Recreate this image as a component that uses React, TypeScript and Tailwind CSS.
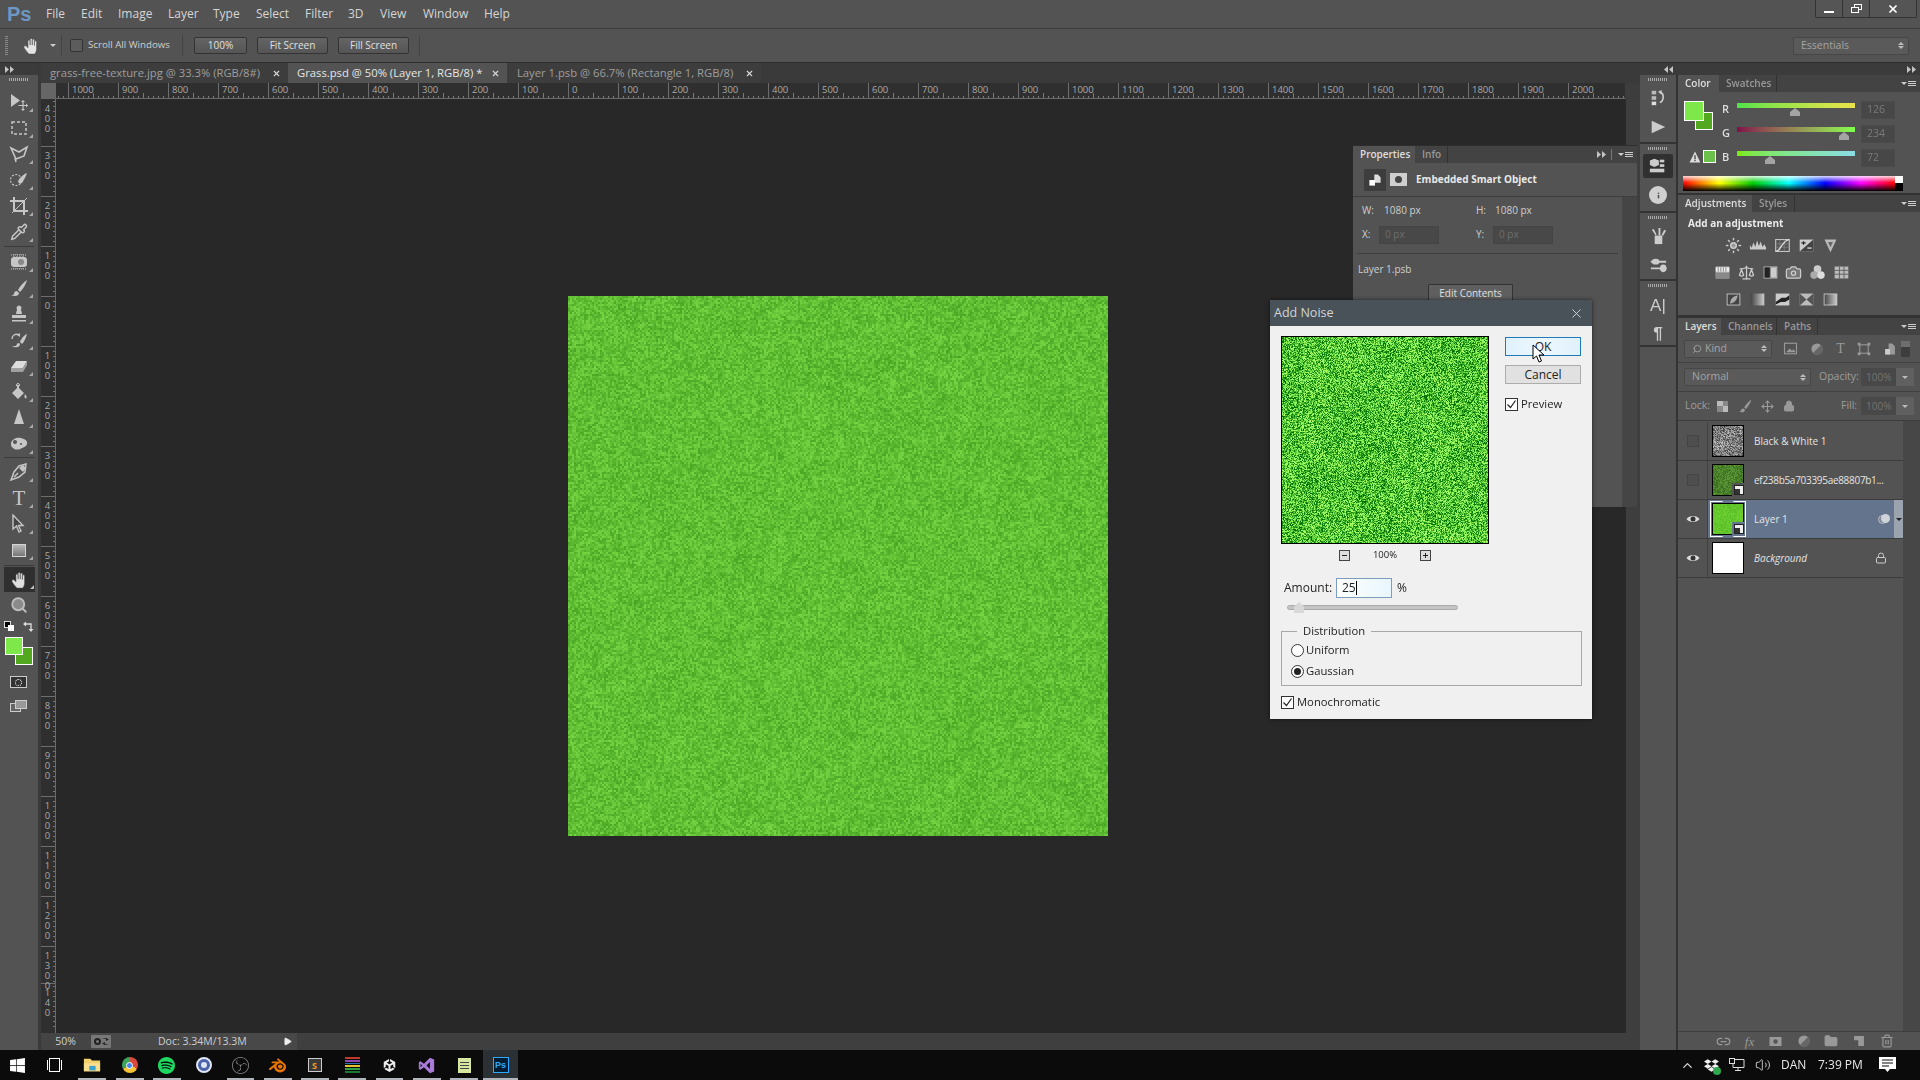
import React, { useEffect, useRef } from "react";
import { Search, Pipette, Sun, Scale, Camera, X, Link2, Trash2, ChevronUp, Volume2, Info, Play, Lock, Move, Folder } from "lucide-react";
import { SiSpotify, SiObsstudio, SiBlender, SiUnity, SiDropbox } from "react-icons/si";
import { FaWindows } from "react-icons/fa";

type NoiseProps = { w: number; h: number; base: number[]; amp: number[]; cell?: number; coarse?: number; seed?: number; className?: string };
function Noise({ w, h, base, amp, cell = 1, coarse = 0.3, seed = 7, className }: NoiseProps) {
  const ref = useRef<HTMLCanvasElement>(null);
  useEffect(() => {
    const c = ref.current;
    if (!c) return;
    const ctx = c.getContext("2d");
    if (!ctx) return;
    let s = (seed * 2654435 + 17) >>> 0;
    const rnd = () => {
      s = (s + 0x6d2b79f5) >>> 0;
      let t = s;
      t = Math.imul(t ^ (t >>> 15), t | 1);
      t ^= t + Math.imul(t ^ (t >>> 7), t | 61);
      return ((t ^ (t >>> 14)) >>> 0) / 4294967296;
    };
    const gs = 10;
    const gw = Math.ceil(w / gs) + 2;
    const gh = Math.ceil(h / gs) + 2;
    const grid: number[] = [];
    for (let i = 0; i < gw * gh; i++) grid.push(rnd() * 2 - 1);
    for (let y = 0; y < h; y += cell) {
      for (let x = 0; x < w; x += cell) {
        const fx = x / gs;
        const fy = y / gs;
        const ix = Math.floor(fx);
        const iy = Math.floor(fy);
        const tx = fx - ix;
        const ty = fy - iy;
        const a = grid[iy * gw + ix];
        const b = grid[iy * gw + ix + 1];
        const d = grid[(iy + 1) * gw + ix];
        const e = grid[(iy + 1) * gw + ix + 1];
        const low = (a * (1 - tx) + b * tx) * (1 - ty) + (d * (1 - tx) + e * tx) * ty;
        const n = (rnd() * 2 - 1) * (1 - coarse) + low * coarse;
        ctx.fillStyle = `rgb(${base[0] + n * amp[0]},${base[1] + n * amp[1]},${base[2] + n * amp[2]})`;
        ctx.fillRect(x, y, cell, cell);
      }
    }
  }, []);
  return <canvas ref={ref} width={w} height={h} className={"block " + (className ?? "")} />;
}

const G = "#c6c6c6";
function Ico({ children, size = 20 }: { children: React.ReactNode; size?: number }) {
  return (
    <svg viewBox="0 0 20 20" width={size} height={size} fill="none" stroke="none">
      {children}
    </svg>
  );
}

function HandIcon({ size = 18, color = "#dedede" }: { size?: number; color?: string }) {
  return (
    <Ico size={size}>
      <path d="M6.500 19C5 16.500 1 13 1 11c0-1.300 1.700-1.700 2.800-.7L5.500 12V4.500a1.200 1.200 0 0 1 2.400 0V9V2.800a1.200 1.200 0 0 1 2.400 0V9V3.500a1.200 1.200 0 0 1 2.400 0V9.500V5.500a1.200 1.200 0 0 1 2.400 0V13c0 2.500-1 4.500-2 6z" fill={color} stroke="#4a4a4a" strokeWidth="0.6" />
    </Ico>
  );
}

function Arrows({ left, color = "#c4c4c4" }: { left?: boolean; color?: string }) {
  return (
    <svg width="9" height="7" viewBox="0 0 9 7">
      <path d={left ? "M4 0v7L0 3.500zM9 0v7L5 3.500z" : "M0 0v7l4-3.500zM5 0v7l4-3.500z"} fill={color} />
    </svg>
  );
}

const tools1 = [
  <Ico key="m"><path d="M2 2v13l9-6.5z" fill={G} /><path d="M14 9v9M9.5 13.5h9" stroke={G} strokeWidth="1.2" /><path d="M14 8l-2 2h4zM14 19l-2-2h4zM19 13.500l-2-2v4z" fill={G} /></Ico>,
  <Ico key="r"><rect x="3" y="4" width="14" height="12" stroke={G} strokeWidth="1.5" strokeDasharray="3 2" /></Ico>,
  <Ico key="l"><path d="M2 4l8 4 8-5-3 9-8 3z" stroke={G} strokeWidth="1.6" /><path d="M6 14l1 4" stroke={G} strokeWidth="1.6" /></Ico>,
  <Ico key="q"><circle cx="7" cy="10" r="5.500" stroke={G} strokeWidth="1.2" strokeDasharray="2 1.500" /><path d="M18 3c-3 1-7 4-9 8 0 2 2 3 4 2 2-3 4-7 5-10z" fill={G} /></Ico>,
  <Ico key="c"><path d="M5 1v14h14M1 5h14v14" stroke={G} strokeWidth="2" /><path d="M3 17L18 2" stroke={G} strokeWidth="1" /></Ico>,
  <Pipette key="p" size={18} color={G} strokeWidth={2} />,
];
const tools2 = [
  <Ico key="h"><rect x="2" y="5" width="16" height="10" rx="3" fill={G} /><path d="M2 3h16M2 17h16M5 2v4M8 2v4M11 2v4M14 2v4M5 14v4M8 14v4M11 14v4M14 14v4" stroke={G} strokeWidth="1" strokeDasharray="1 1" /><circle cx="12" cy="10" r="3" fill="#888" /></Ico>,
  <Ico key="b"><path d="M18 2c-3 2-7 6-9 10l2 2c3-3 6-8 7-12zM8 13c-2 0-3 1-3 3 0 1-2 1-3 1 3 1.500 8 1.500 8-2z" fill={G} /></Ico>,
  <Ico key="s"><path d="M7 10h6c0-2-1-3-1-4.500a2.500 2.500 0 1 0-4 0C8 7 7 8 7 10zM3 11h14v3H3zM3 16h14v1.500H3z" fill={G} /></Ico>,
  <Ico key="hb"><path d="M18 4c-3 1-6 5-7 8l2 2c2-2 4-6 5-10zM10 13c-2 0-2 1-3 3H3c3 2 8 2 8-2z" fill={G} /><path d="M3 9c0-4 4-6 7-4" stroke={G} strokeWidth="1.400" /><path d="M11 3v4l-3-2z" fill={G} /></Ico>,
  <Ico key="e"><path d="M7 5h11l-4 7H2z" fill="#dcdcdc" /><path d="M2 12h12v4H2zM14 12l4-7v4l-4 7z" fill="#a0a0a0" /></Ico>,
  <Ico key="bk"><path d="M8 3v3L3 11l6 6 6-6-5-5V3z" fill={G} /><path d="M16 12c2 2 2 4 1 4.500-1.500 0-2-2-1-4.500z" fill={G} /><circle cx="9" cy="3" r="1.500" stroke={G} /></Ico>,
  <Ico key="d"><path d="M10 1l5 15H5z" fill={G} /></Ico>,
  <Ico key="sp"><path d="M2 9c1-4 6-6 10-5 4 1 7 3 6 6-1 3-3 3-5 4-3 2-7 2-9 0-2-1-2-3-2-5z" fill={G} /><circle cx="6" cy="8" r="2" fill="#555" /><circle cx="12" cy="10" r="1" fill="#555" /></Ico>,
];
const tools3 = [
  <Ico key="pn"><path d="M17 2l-7 2-5 6-3 8 8-3 6-5zM5 15l4-4" stroke={G} strokeWidth="1.500" /><path d="M14 3l3 3-3 4-4-4z" fill={G} /></Ico>,
  <span key="t" className="font-['Liberation_Serif',serif] text-[21px] leading-none text-[#c6c6c6]">T</span>,
  <Ico key="a"><path d="M4 1v14l3.500-3 2.500 6 2-1-2.500-5.500H14z" stroke={G} strokeWidth="1.400" fill="#444" /></Ico>,
  <div key="rc" className="h-[13px] w-[14px] border border-[#d4d4d4] bg-gradient-to-b from-[#b8b8b8] to-[#777]" />,
];

function ToolBtn({ children, corner = true, sel = false }: { children: React.ReactNode; corner?: boolean; sel?: boolean }) {
  return (
    <div className={sel ? "relative mx-[4px] flex h-[25px] w-[31px] items-center justify-center bg-[#2f2f2f]" : "relative flex h-[26px] w-full items-center justify-center"}>
      {children}
      {corner && <div className={sel ? "absolute bottom-[3px] right-[1px] h-0 w-0 border-b-[4px] border-l-[4px] border-b-[#bbb] border-l-transparent" : "absolute bottom-[3px] right-[5px] h-0 w-0 border-b-[4px] border-l-[4px] border-b-[#aaa] border-l-transparent"} />}
    </div>
  );
}

function Grip({ className }: { className?: string }) {
  return <div className={"h-[3px] border-x-0 bg-[repeating-linear-gradient(to_right,#aaa_0,#aaa_1px,transparent_1px,transparent_2px)] " + (className ?? "")} />;
}

function Toolbar() {
  return (
    <div className="flex h-full w-[41px] shrink-0">
      <div className="flex w-[38px] flex-col bg-[#535353]">
        <div className="flex h-[12px] items-center bg-[#3b3b3b] pl-[5px]"><Arrows /></div>
        <Grip className="mx-[9px] mt-[3px]" />
        <div className="h-[8px]" />
        {tools1.map((t, i) => <ToolBtn key={i}>{t}</ToolBtn>)}
        <div className="mx-[4px] my-[1px] h-[1px] bg-[#3a3a3a]" />
        <div className="h-[1px]" />
        {tools2.map((t, i) => <ToolBtn key={i}>{t}</ToolBtn>)}
        <div className="mx-[4px] h-[1px] bg-[#3a3a3a]" />
        <div className="h-[1px]" />
        {tools3.map((t, i) => <ToolBtn key={i}>{t}</ToolBtn>)}
        <div className="mx-[4px] mt-[2px] h-[1px] bg-[#3a3a3a]" />
        <div className="h-[1px]" />
        <ToolBtn sel><HandIcon /></ToolBtn>
        <ToolBtn corner={false}><Search size={18} color="#bdbdbd" fill="#8a8a8a" strokeWidth={2.500} /></ToolBtn>
        <div className="flex h-[16px] items-center justify-between px-[4px]">
          <div className="relative h-[10px] w-[10px]">
            <div className="absolute left-0 top-0 h-[7px] w-[7px] border border-[#ddd] bg-black" />
            <div className="absolute bottom-0 right-0 h-[6px] w-[6px] bg-white" />
          </div>
          <svg width="11" height="11" viewBox="0 0 11 11"><path d="M2 3h6v6" stroke="#ddd" strokeWidth="1.300" fill="none" /><path d="M3 0.500v5L0 3zM5.500 8h5L8 11z" fill="#ddd" /></svg>
        </div>
        <div className="relative ml-[5px] mt-[3px] h-[28px] w-[28px]">
          <div className="absolute bottom-0 right-0 h-[18px] w-[18px] border border-white bg-[#52a920]" />
          <div className="absolute left-0 top-0 h-[18px] w-[18px] border border-white bg-[#7ee84a]" />
        </div>
        <div className="ml-[10px] mt-[11px] flex h-[12px] w-[17px] items-center justify-center border border-[#ccc] bg-[#333]">
          <div className="h-[7px] w-[7px] rounded-full border border-dotted border-white" />
        </div>
        <div className="relative ml-[10px] mt-[12px] h-[12px] w-[17px]">
          <div className="absolute bottom-0 left-0 h-[9px] w-[11px] border border-[#ccc] bg-[#666]" />
          <div className="absolute right-0 top-0 h-[9px] w-[12px] border border-[#ccc] bg-[#999]" />
        </div>
      </div>
      <div className="w-[3px] bg-[#3a3a3a]" />
    </div>
  );
}

function Tab({ label, active, w, pl }: { label: string; active?: boolean; w: string; pl: string }) {
  return (
    <div className={`flex h-full items-center ${w} ${pl} ${active ? "bg-[#535353] text-[#e6e6e6]" : "bg-[#3d3d3d] text-[#9d9d9d]"}`}>
      <span className="flex-1 whitespace-nowrap text-[11.25px]">{label}</span>
      <X size={9} strokeWidth={3} color="#d8d8d8" className="mr-[7px]" />
    </div>
  );
}

function HRuler() {
  const x0 = 568 - 56;
  const vals: number[] = [];
  for (let v = -1000; v <= 2000; v += 100) vals.push(v);
  const small: number[] = [];
  for (let x = 0; x < 1569; x += 5) small.push(x);
  return (
    <svg width="1569" height="16" className="block bg-[#2f2f2f]">
      {small.map((x) => {
        const k = Math.round((x - x0 + 1000) / 5) % 10;
        const h = k === 5 ? 5 : 2;
        return <rect key={x} x={x + (x0 % 5)} y={15 - h} width="1" height={h} fill="#7a7a7a" />;
      })}
      {vals.map((v) => (
        <g key={v}>
          <rect x={x0 + v / 2} y="0" width="1" height="15" fill="#6d6d6d" />
          <text x={x0 + v / 2 + 4} y="10" fontSize="9.5" fill="#a9a9a9" fontFamily="Open Sans">{Math.abs(v)}</text>
        </g>
      ))}
      <rect x="0" y="15" width="1569" height="1" fill="#6a6a6a" />
    </svg>
  );
}

function VRuler() {
  const y0 = 296 - 99;
  const vals: number[] = [];
  for (let v = -300; v <= 1300; v += 100) vals.push(v);
  const small: number[] = [];
  for (let y = 4; y < 934; y += 5) small.push(y);
  return (
    <svg width="15" height="934" className="block shrink-0 bg-[#2f2f2f]">
      {small.map((y) => {
        const k = ((y - (y0 % 50) + 5000) % 50) === 25;
        return <rect key={y} x={k ? 10 : 12} y={y - 2} width={k ? 5 : 3} height="1" fill="#777" />;
      })}
      <text x="6.500" y="3" fontSize="9.500" fill="#a9a9a9" fontFamily="Open Sans" className="[writing-mode:vertical-rl] [text-orientation:upright] tracking-[-2.9px]">400</text>
      <rect x="0" y="884" width="15" height="1" fill="#6d6d6d" />
      <text x="6.500" y="887" fontSize="9.500" fill="#a9a9a9" fontFamily="Open Sans" className="[writing-mode:vertical-rl] [text-orientation:upright] tracking-[-2.9px]">140</text>
      {vals.map((v) => (
        <g key={v}>
          <rect x="0" y={y0 + v / 2} width="15" height="1" fill="#6d6d6d" />
          <text x="6.500" y={y0 + v / 2 + 3} fontSize="9.500" fill="#a9a9a9" fontFamily="Open Sans" className="[writing-mode:vertical-rl] [text-orientation:upright] tracking-[-2.9px]">{Math.abs(v)}</text>
        </g>
      ))}
      <rect x="14" y="0" width="1" height="934" fill="#6a6a6a" />
    </svg>
  );
}

const BASE = [96, 190, 52];
const AMP = [27, 27, 18];

function DocArea() {
  return (
    <div className="flex h-full min-w-0 flex-1 flex-col">
      <div className="flex h-[20px] shrink-0 bg-[#3a3a3a]">
        <Tab w="w-[247px]" pl="pl-[9px]" label="grass-free-texture.jpg @ 33.3% (RGB/8#)" />
        <Tab w="w-[219px]" pl="pl-[9px]" active label="Grass.psd @ 50% (Layer 1, RGB/8) *" />
        <Tab w="w-[254px]" pl="pl-[10px]" label="Layer 1.psb @ 66.7% (Rectangle 1, RGB/8)" />
      </div>
      <div className="flex h-[16px] shrink-0">
        <div className="h-[16px] w-[15px] bg-[#666]" />
        <HRuler />
        <div className="flex-1 bg-[#3d3d3d]" />
      </div>
      <div className="flex min-h-0 flex-1">
        <VRuler />
        <div className="flex flex-1 items-center justify-center bg-[#282828] pr-[5px]">
          <Noise w={540} h={540} base={BASE} amp={AMP} cell={2} coarse={0.2} seed={11} />
        </div>
        <div className="w-[15px] border-l border-[#2a2a2a] bg-[#3e3e3e]" />
      </div>
      <div className="flex h-[17px] shrink-0 items-center bg-[#484848] text-[10.5px] text-[#cfcfcf]">
        <div className="flex h-full w-[50px] items-center justify-end bg-[#444] pr-[15px]">50%</div>
        <div className="flex h-[13px] w-[20px] items-center justify-center gap-[1px] rounded-[1px] bg-[#777]">
          <div className="h-[7px] w-[7px] rounded-full border-2 border-[#222]" />
          <svg width="7" height="7" viewBox="0 0 7 7"><path d="M0 1h4v2l3-1.500L4 0zM7 6H3V4L0 5.500 3 7z" fill="#222" /></svg>
        </div>
        <div className="ml-[47px] w-[125px]">Doc: 3.34M/13.3M</div>
        <Play size={9} fill="#eee" color="#eee" />
        <div className="ml-[5px] h-full flex-1 bg-[#3f3f3f]" />
      </div>
    </div>
  );
}

function PanelTabs({ tabs, extra }: { tabs: { t: string; w: string }[]; extra?: React.ReactNode }) {
  return (
    <div className="flex h-[17px] shrink-0 items-stretch bg-[#434343]">
      {tabs.map((t, i) => (
        <div key={t.t} className={`flex items-center pl-[7px] text-[10px] font-semibold ${t.w} ${i === 0 ? "bg-[#535353] text-[#dedede]" : "border-r border-[#333] text-[#999]"}`}>{t.t}</div>
      ))}
      <div className="flex-1" />
      {extra}
      <MenuIcon />
    </div>
  );
}
function MenuIcon() {
  return (
    <div className="mr-[4px] flex items-center gap-[1px] self-center">
      <div className="h-0 w-0 border-x-[3px] border-t-[3px] border-x-transparent border-t-[#ccc]" />
      <div className="flex flex-col gap-[1px]">
        <div className="h-[1px] w-[8px] bg-[#ccc]" />
        <div className="h-[1px] w-[8px] bg-[#ccc]" />
        <div className="h-[1px] w-[8px] bg-[#ccc]" />
      </div>
    </div>
  );
}

function Thumb({ left }: { left: string }) {
  return (
    <div className={`absolute top-[5px] h-[8px] w-[10px] bg-[#a4a4a4] [clip-path:polygon(50%_0,100%_50%,100%_100%,0_100%,0_50%)] ${left}`} />
  );
}

function ColorRow({ l, grad, thumb, val }: { l: string; grad: string; thumb: string; val: string }) {
  return (
    <div className="flex h-[24px] items-start">
      <div className="w-[15px] text-[11px] font-semibold leading-[16px] text-[#ddd]">{l}</div>
      <div className={`relative mt-[2px] h-[5px] w-[118px] ${grad}`}>
        <Thumb left={thumb} />
      </div>
      <div className="ml-[6px] flex h-[18px] w-[34px] items-center border border-[#4a4a4a] bg-[#474747] pl-[5px] text-[10.5px] text-[#7a7a7a]">{val}</div>
    </div>
  );
}

function ColorPanel() {
  return (
    <div className="h-[101px] shrink-0 bg-[#535353]">
      <div className="flex h-[81px] pt-[9px]">
        <div className="flex w-[44px] shrink-0 flex-col pl-[6px]">
          <div className="relative h-[29px] w-[29px]">
            <div className="absolute bottom-0 right-0 h-[18px] w-[18px] border border-white bg-[#52a920]" />
            <div className="absolute left-0 top-0 h-[20px] w-[20px] border border-white bg-[#7ee84a]" />
          </div>
          <div className="mt-[20px] flex items-center gap-[2px] pl-[5px]">
            <Ico size={12}><path d="M10 1L19 19H1z" fill="#ddd" /><rect x="9" y="7" width="2" height="7" fill="#333" /><rect x="9" y="15" width="2" height="2" fill="#333" /></Ico>
            <div className="h-[13px] w-[13px] border border-white bg-[#6cc04c]" />
          </div>
        </div>
        <div>
          <ColorRow l="R" val="126" grad="bg-gradient-to-r from-[#4de44a] to-[#eae24a]" thumb="left-[53px]" />
          <ColorRow l="G" val="234" grad="bg-gradient-to-r from-[#7e0a48] to-[#7eff48]" thumb="left-[102px]" />
          <ColorRow l="B" val="72" grad="bg-gradient-to-r from-[#7eea00] to-[#8cdce6]" thumb="left-[28px]" />
        </div>
      </div>
      <div className="ml-[5px] mt-[3px] flex h-[15px] w-[220px]">
        <div className="flex-1 bg-[linear-gradient(to_bottom,rgba(255,255,255,0.85),rgba(255,255,255,0)_45%,rgba(0,0,0,0)_50%,#000),linear-gradient(to_right,#f00,#ff0_17%,#0c0_33%,#0ff_50%,#00f_67%,#f0f_84%,#f00)]" />
        <div className="flex w-[8px] flex-col"><div className="h-[7px] bg-white" /><div className="flex-1 bg-black" /></div>
      </div>
    </div>
  );
}

const ad = "url(#adg)";
const adjRow1 = [
  <Sun key="1" size={17} color="#ccc" fill="#999" strokeWidth={2} />,
  <Ico key="2" size={18}><path d="M1 14V9l2 3 2-6 2 5 2-7 2 6 2-5 2 6 2-3 2 4v2z" fill="#ccc" /></Ico>,
  <Ico key="3" size={17}><rect x="2" y="3" width="16" height="14" stroke="#ccc" strokeWidth="1.200" /><path d="M2 8h16M2 12h16M7 3v14M12 3v14" stroke="#888" strokeWidth=".8" /><path d="M2 17c6 0 8-14 16-14" stroke="#ddd" strokeWidth="1.500" /></Ico>,
  <Ico key="4" size={17}><rect x="2" y="3" width="16" height="14" fill="#ccc" /><path d="M2 17L18 3V17z" fill="#444" /><path d="M4 7h5M6.500 5v4" stroke="#222" strokeWidth="1.400" /><path d="M11 13h5" stroke="#eee" strokeWidth="1.400" /></Ico>,
  <Ico key="5" size={17}><path d="M3 3h14l-7 15z" fill="#bbb" /><path d="M7 6h6l-3 6z" fill="#666" /></Ico>,
];
const adjRow2 = [
  <Ico key="1" size={17}><rect x="2" y="3" width="16" height="14" fill="#bbb" /><rect x="2" y="4" width="16" height="5" fill="#eee" /><path d="M5 4v5M8 4v5M11 4v5M14 4v5" stroke="#777" /><rect x="2" y="10" width="16" height="7" fill="#888" /></Ico>,
  <Scale key="2" size={17} color="#ccc" strokeWidth={1.800} />,
  <Ico key="3" size={17}><rect x="2.500" y="3.500" width="15" height="13" stroke="#ccc" /><rect x="3" y="4" width="6" height="12" fill="#222" /><rect x="10" y="4" width="7" height="12" fill="#ccc" /></Ico>,
  <Camera key="4" size={17} color="#ccc" fill="#777" strokeWidth={1.800} />,
  <Ico key="5" size={17}><circle cx="10" cy="6" r="4.500" fill="#ccc" /><circle cx="6" cy="13" r="4.500" fill="#aaa" /><circle cx="14" cy="13" r="4.500" fill="#ddd" /></Ico>,
  <Ico key="6" size={17}><rect x="2" y="3" width="16" height="14" fill="#bbb" /><path d="M2 7.500h16M2 12h16M7.500 3v14M13 3v14" stroke="#555" /></Ico>,
];
const adjRow3 = [
  <Ico key="1" size={17}><rect x="2.500" y="3.500" width="15" height="13" fill="#444" stroke="#ccc" /><path d="M6 15c0-6 4-9 9-10-1 6-4 9-9 10z" fill="#aaa" /></Ico>,
  <Ico key="2" size={17}><rect x="2" y="3" width="16" height="14" fill={ad} /></Ico>,
  <Ico key="3" size={17}><rect x="2" y="3" width="16" height="14" fill="#ccc" /><path d="M2 13l7-5h5l4-3v5l-5 3H8l-6 3z" fill="#222" /></Ico>,
  <Ico key="4" size={17}><rect x="2" y="3" width="16" height="14" fill="#bbb" /><path d="M2 3l8 7-8 7zM18 3l-8 7 8 7z" fill="#555" /></Ico>,
  <Ico key="5" size={17}><rect x="2.500" y="3.500" width="15" height="13" fill={ad} stroke="#ccc" /></Ico>,
];

function AdjPanel() {
  return (
    <div className="flex h-[103px] shrink-0 flex-col bg-[#535353]">
      <div className="pl-[10px] pt-[4px] text-[10px] font-bold leading-[15px] text-[#eaeaea]">Add an adjustment</div>
      <svg width="0" height="0" className="absolute"><defs><linearGradient id="adg" x1="0" x2="1"><stop offset="0" stopColor="#444" /><stop offset="1" stopColor="#ccc" /></linearGradient></defs></svg>
      <div className="ml-[47px] mt-[1px] flex h-[27px] w-[114px] items-center justify-between">{adjRow1}</div>
      <div className="ml-[36px] flex h-[27px] w-[136px] items-center justify-between">{adjRow2}</div>
      <div className="ml-[47px] flex h-[27px] w-[114px] items-center justify-between">{adjRow3}</div>
    </div>
  );
}

function DropBox({ w, text }: { w: string; text: React.ReactNode }) {
  return (
    <div className={`flex h-[18px] items-center justify-between rounded-[2px] border border-[#474747] bg-[#5a5a5a] pl-[7px] pr-[4px] text-[10.5px] text-[#a4a4a4] ${w}`}>
      {text}
      <div className="flex flex-col gap-[1px]">
        <div className="h-0 w-0 border-x-[3px] border-b-[3px] border-x-transparent border-b-[#bbb]" />
        <div className="h-0 w-0 border-x-[3px] border-t-[3px] border-x-transparent border-t-[#bbb]" />
      </div>
    </div>
  );
}

function Spin({ v }: { v: string }) {
  return (
    <div className="flex h-[18px] w-[53px] text-[10px] text-[#737373]">
      <div className="flex w-[35px] items-center bg-[#484848] pl-[5px]">{v}</div>
      <div className="flex flex-1 items-center justify-center bg-[#606060]">
        <div className="h-0 w-0 border-x-[3px] border-t-[3px] border-x-transparent border-t-[#bbb]" />
      </div>
    </div>
  );
}

function Badge({ sel }: { sel?: boolean }) {
  return (
    <div className={`absolute bottom-[-2px] right-[-2px] flex h-[14px] w-[13px] items-center justify-center ${sel ? "bg-[#64748c]" : "bg-[#535353]"}`}>
      <div className="relative h-[10px] w-[10px] border border-[#222] bg-[#eee]">
        <div className="absolute bottom-0 left-0 h-[5px] w-[5px] bg-[#333]" />
      </div>
    </div>
  );
}

function Eye() {
  return (
    <svg width="14" height="10" viewBox="0 0 14 10">
      <path d="M0.500 5C3 1 11 1 13.500 5 11 9 3 9 0.500 5z" fill="#ddd" />
      <circle cx="7" cy="5" r="2.500" fill="#333" />
    </svg>
  );
}

function LayerRow({ name, vis, sel, italic, thumb, badge, right, nameCls }: { name: string; vis: boolean; sel?: boolean; italic?: boolean; thumb: React.ReactNode; badge?: boolean; right?: React.ReactNode; nameCls?: string }) {
  return (
    <div className="flex h-[39px] shrink-0 border-b border-[#3c3c3c]">
      <div className="flex w-[30px] shrink-0 items-center justify-center border-r border-[#404040]">
        {vis ? <Eye /> : <div className="h-[12px] w-[12px] border border-[#444] bg-[#4e4e4e]" />}
      </div>
      <div className={`flex flex-1 items-center pl-[4px] ${sel ? "bg-[#64748c]" : "bg-[#535353]"}`}>
        <div className="relative h-[32px] w-[32px] shrink-0 border border-black">
          {thumb}
          {badge && <Badge sel={sel} />}
          {sel && <div className="absolute -inset-[3px] border border-white [clip-path:polygon(0_0,35%_0,35%_6%,6%_6%,6%_94%,35%_94%,35%_100%,0_100%,0_0,100%_0,100%_100%,65%_100%,65%_94%,94%_94%,94%_6%,65%_6%,65%_0,100%_0)]" />}
        </div>
        <div className={`ml-[10px] flex-1 truncate pt-[1px] text-[10px] ${italic ? "italic" : ""} ${nameCls ?? ""} text-[#e4e4e4]`}>{name}</div>
        {right}
      </div>
    </div>
  );
}

function LayersPanel() {
  return (
    <div className="flex min-h-0 flex-1 flex-col bg-[#535353]">
      <PanelTabs tabs={[{ t: "Layers", w: "w-[43px]" }, { t: "Channels", w: "w-[56px]" }, { t: "Paths", w: "w-[41px]" }]} />
      <div className="flex h-[28px] shrink-0 items-center border-b border-[#404040] pl-[6px]">
        <DropBox w="w-[88px]" text={<span className="flex items-center gap-[3px]"><Search size={10} className="-scale-x-100" />Kind</span>} />
        <div className="ml-[11px] flex w-[114px] items-center justify-between text-[#999]">
          <Ico size={15}><rect x="2" y="3" width="16" height="14" stroke="#999" strokeWidth="1.500" /><path d="M4 15l5-5 3 3 2-2 3 4z" fill="#999" /></Ico>
          <Ico size={14}><circle cx="10" cy="10" r="8" fill="#999" /><path d="M4 16L16 4A8 8 0 0 1 4 16z" fill="#666" /></Ico>
          <span className="font-['Liberation_Serif',serif] text-[14px] leading-none">T</span>
          <Ico size={14}><rect x="4" y="4" width="12" height="12" stroke="#999" strokeWidth="1.500" /><path d="M1 1h4v4H1zM15 1h4v4h-4zM1 15h4v4H1zM15 15h4v4h-4z" fill="#999" /></Ico>
          <Ico size={14}><path d="M8 2h5l4 4v12H8z" fill="#999" /><path d="M3 10h7v8H3z" fill="#ccc" /></Ico>
        </div>
        <div className="ml-[4px] flex h-[16px] w-[9px] flex-col rounded-[1px] bg-[#3d3d3d]"><div className="h-[6px] bg-[#6e6e6e]" /></div>
      </div>
      <div className="flex h-[29px] shrink-0 items-center border-b border-[#404040] pl-[6px]">
        <DropBox w="w-[127px]" text="Normal" />
        <span className="ml-[8px] w-[42px] text-[10.5px] text-[#9d9d9d]">Opacity:</span>
        <Spin v="100%" />
      </div>
      <div className="flex h-[29px] shrink-0 items-center border-b border-[#3c3c3c] pl-[7px] text-[10.5px] text-[#9d9d9d]">
        <span className="w-[32px]">Lock:</span>
        <div className="flex w-[78px] items-center justify-between">
          <div className="grid h-[11px] w-[11px] grid-cols-2 bg-[#888]"><div className="bg-[#bbb]" /><div /><div /><div className="bg-[#bbb]" /></div>
          <Ico size={16}><path d="M18 2c-3 2-7 6-9 10l2 2c3-3 6-8 7-12zM8 13c-2 0-3 1-3 3-1 1-2 1-3 1 3 1.500 8 1.500 8-2z" fill="#999" /></Ico>
          <Move size={13} color="#999" />
          <Lock size={12} color="#999" fill="#999" />
        </div>
        <span className="ml-[46px] w-[20px]">Fill:</span>
        <span><Spin v="100%" /></span>
      </div>
      <div className="flex min-h-0 flex-1">
        <div className="flex w-[225px] shrink-0 flex-col pt-[1px]">
          <LayerRow name="Black & White 1" vis={false} thumb={<Noise w={30} h={30} base={[125, 125, 125]} amp={[85, 85, 85]} seed={3} />} />
          <LayerRow name="ef238b5a703395ae88807b1..." nameCls="tracking-[-0.3px]" vis={false} badge thumb={<Noise w={30} h={30} base={[70, 125, 40]} amp={[30, 35, 20]} seed={5} />} />
          <LayerRow name="Layer 1" vis sel badge thumb={<Noise w={30} h={30} base={[100, 200, 45]} amp={[18, 18, 10]} seed={9} />} right={
            <div className="flex h-full items-center">
              <div className="relative mr-[4px] h-[10px] w-[12px]"><div className="absolute left-0 top-[1px] h-[9px] w-[9px] rounded-full border border-[#bbb] bg-[#7a869a]" /><div className="absolute right-0 top-0 h-[9px] w-[9px] rounded-full bg-[#cfd3da]" /></div>
              <div className="flex h-full w-[9px] items-center justify-center bg-[#9aa3ae]"><div className="h-0 w-0 border-x-[3px] border-t-[3px] border-x-transparent border-t-[#222]" /></div>
            </div>} />
          <LayerRow name="Background" vis italic thumb={<div className="h-full w-full bg-white" />} right={<Lock size={12} color="#ccc" className="mr-[16px]" />} />
          <div className="flex-1" />
        </div>
        <div className="flex-1 bg-[#474747]" />
      </div>
      <div className="flex h-[19px] shrink-0 items-center border-t border-[#3f3f3f] bg-[#535353] pl-[38px] text-[#999]">
        <div className="flex w-[178px] items-center justify-between">
          <Link2 size={15} />
          <span className="font-['Liberation_Serif',serif] text-[13px] italic leading-none">fx</span>
          <Ico size={15}><rect x="2" y="4" width="16" height="12" fill="#999" /><circle cx="10" cy="10" r="3" fill="#555" /></Ico>
          <Ico size={14}><circle cx="10" cy="10" r="8" fill="#999" /><path d="M4 16L16 4A8 8 0 0 1 4 16z" fill="#666" /></Ico>
          <Folder size={14} fill="#999" />
          <Ico size={14}><path d="M3 3h14v14H9V9H3z" fill="#999" /></Ico>
          <Trash2 size={14} />
        </div>
      </div>
    </div>
  );
}

function DockSep() {
  return <div className="h-[2px] shrink-0 bg-[#333]" />;
}
function Dock() {
  return (
    <div className="flex w-[36px] shrink-0 flex-col bg-[#535353]">
      <Grip className="mx-[8px] mt-[3px] shrink-0" />
      <div className="mt-[3px] flex h-[27px] items-center justify-center">
        <Ico size={18}><rect x="3" y="2" width="5" height="4" fill="#bbb" /><rect x="3" y="8" width="5" height="4" fill="#bbb" /><rect x="3" y="14" width="5" height="4" fill="#ddd" /><path d="M12 4c5 0 5 9 0 11" stroke="#ccc" strokeWidth="1.800" /><path d="M10 3l4-2v5z" fill="#ccc" /></Ico>
      </div>
      <div className="flex h-[31px] items-center justify-center">
        <Ico size={18}><path d="M3 3l15 7-15 7z" fill="#ccc" /></Ico>
      </div>
      <DockSep />
      <Grip className="mx-[8px] mt-[3px] shrink-0" />
      <div className="mx-[3px] mt-[4px] flex h-[24px] items-center justify-center rounded-[2px] bg-[#303030]">
        <Ico size={18}><path d="M6 2l5 2v5l-5 2-5-2V4z" fill="#ccc" /><rect x="12" y="3" width="5" height="3" fill="#ccc" /><rect x="12" y="8" width="5" height="3" fill="#ccc" /><rect x="1" y="13" width="16" height="4" fill="#ccc" /></Ico>
      </div>
      <div className="flex h-[33px] items-center justify-center pt-[1px]">
        <div className="flex h-[18px] w-[18px] items-center justify-center rounded-full bg-[#d0d0d0]"><Info size={13} color="#555" strokeWidth={3} className="[&>circle]:hidden" /></div>
      </div>
      <DockSep />
      <Grip className="mx-[8px] mt-[3px] shrink-0" />
      <div className="mt-[2px] flex h-[30px] items-center justify-center">
        <Ico size={19}><path d="M6 9h8v9H6z" fill="#ccc" /><path d="M7 9L3 3l2-1 3 6zM10 9V1h2v8zM13 9l3-6 2 1-3 5z" fill="#ccc" /></Ico>
      </div>
      <div className="flex h-[28px] items-center justify-center">
        <Ico size={19}><path d="M2 5h16v2H2zM2 12h16v2H2z" fill="#ccc" /><ellipse cx="7" cy="6" rx="4" ry="3" fill="#ccc" /><ellipse cx="15" cy="13" rx="3.500" ry="4" fill="#ccc" /></Ico>
      </div>
      <DockSep />
      <Grip className="mx-[8px] mt-[3px] shrink-0" />
      <div className="mt-[2px] flex h-[32px] items-center justify-center font-['Liberation_Sans',sans-serif] text-[17px] leading-none text-[#ccc]">A|</div>
      <div className="flex h-[24px] items-center justify-center font-['Liberation_Sans',sans-serif] text-[17px] font-bold leading-none text-[#ccc]">¶</div>
      <DockSep />
      <div className="flex-1" />
    </div>
  );
}

function RightSide() {
  return (
    <div className="flex h-full w-[280px] shrink-0 flex-col">
      <div className="flex h-[12px] shrink-0 items-center justify-between bg-[#3b3b3b] pl-[24px] pr-[4px]">
        <Arrows left />
        <Arrows />
      </div>
      <div className="flex min-h-0 flex-1">
        <Dock />
        <div className="w-[2px] bg-[#333]" />
        <div className="flex min-w-0 flex-1 flex-col">
          <PanelTabs tabs={[{ t: "Color", w: "w-[41px]" }, { t: "Swatches", w: "w-[58px]" }]} />
          <ColorPanel />
          <div className="h-[2px] shrink-0 bg-[#333]" />
          <PanelTabs tabs={[{ t: "Adjustments", w: "w-[74px]" }, { t: "Styles", w: "w-[43px]" }]} />
          <AdjPanel />
          <div className="h-[3px] shrink-0 bg-[#333]" />
          <LayersPanel />
        </div>
      </div>
    </div>
  );
}

function PropsPanel() {
  const label = "text-[10px] text-[#cfcfcf]";
  return (
    <div className="absolute left-[1353px] top-[145px] flex h-[362px] w-[284px] flex-col border-t border-[#2d2d2d] bg-[#535353]">
      <PanelTabs
        tabs={[{ t: "Properties", w: "w-[62px]" }, { t: "Info", w: "w-[33px]" }]}
        extra={<div className="mr-[6px] flex items-center gap-[5px]"><Arrows /><div className="h-[11px] w-[1px] bg-[#777]" /></div>}
      />
      <div className="flex h-[34px] shrink-0 items-center border-b border-[#3d3d3d] pl-[11px]">
        <div className="flex h-[22px] w-[22px] items-center justify-center rounded-[1px] bg-[#3d3d3d]">
          <Ico size={14}><path d="M9 2h5l4 4v8H9z" fill="#ddd" /><path d="M2 10h8v8H2z" fill="#fff" /></Ico>
        </div>
        <div className="ml-[4px] flex h-[13px] w-[17px] items-center justify-center bg-[#cfcfcf]"><div className="h-[7px] w-[7px] rounded-full bg-[#444]" /></div>
        <span className="ml-[9px] text-[10px] font-bold text-[#e8e8e8]">Embedded Smart Object</span>
      </div>
      <div className="flex min-h-0 flex-1">
        <div className="flex-1">
          <div className="grid grid-cols-[114px_1fr] pl-[9px] pt-[3px]">
            <div className={`flex h-[21px] items-center ${label}`}><span className="w-[22px]">W:</span>1080 px</div>
            <div className={`flex h-[21px] items-center ${label}`}><span className="w-[19px]">H:</span>1080 px</div>
            <div className={`mt-[4px] flex h-[19px] items-center ${label}`}><span className="w-[17px]">X:</span><div className="flex h-[18px] w-[60px] items-center border border-[#444] bg-[#484848] pl-[5px] text-[#6e6e6e]">0 px</div></div>
            <div className={`mt-[4px] flex h-[19px] items-center ${label}`}><span className="w-[17px]">Y:</span><div className="flex h-[18px] w-[60px] items-center border border-[#444] bg-[#484848] pl-[5px] text-[#6e6e6e]">0 px</div></div>
          </div>
          <div className="mx-[4px] mt-[9px] h-[1px] bg-[#3d3d3d]" />
          <div className={`ml-[5px] mt-[8px] ${label}`}>Layer 1.psb</div>
          <div className="ml-[75px] mt-[7px] flex h-[20px] w-[85px] items-start justify-center rounded-[1px] border border-[#333] bg-[#5f5f5f] pt-[1px] text-[10px] text-[#e0e0e0]">Edit Contents</div>
        </div>
        <div className="w-[15px] bg-[#454545]" />
      </div>
    </div>
  );
}

function Check({ on, cls }: { on?: boolean; cls?: string }) {
  return (
    <div className={"flex h-[13px] w-[13px] items-center justify-center border border-[#333] bg-white " + (cls ?? "")}>
      {on && <svg width="11" height="11" viewBox="0 0 11 11"><path d="M1.500 5.500l3 3 5-7" stroke="#222" strokeWidth="1.200" fill="none" /></svg>}
    </div>
  );
}

function Radio({ on }: { on?: boolean }) {
  return (
    <div className="flex h-[13px] w-[13px] items-center justify-center rounded-full border border-[#333] bg-white">
      {on && <div className="h-[7px] w-[7px] rounded-full bg-[#222]" />}
    </div>
  );
}

function Dialog() {
  const btn = "flex h-[19px] w-[76px] items-center justify-center text-[12px] text-[#222]";
  return (
    <div className="absolute left-[1270px] top-[300px] flex h-[419px] w-[322px] flex-col shadow-[0_0_4px_rgba(0,0,0,0.6)]">
      <div className="flex h-[26px] shrink-0 items-center justify-between bg-[#4a5259] pl-[4px] pr-[8px] text-[12.5px] text-[#d0d4d7]">
        Add Noise
        <X size={15} color="#e4e6e8" strokeWidth={1.300} />
      </div>
      <div className="flex flex-1 flex-col bg-[#f0f0f0] text-[11.25px] text-[#222]">
        <div className="flex pl-[11px] pt-[10px]">
          <div className="h-[208px] w-[208px] overflow-hidden border border-black">
            <Noise w={206} h={206} base={[82, 192, 52]} amp={[115, 105, 68]} cell={1} coarse={0.15} seed={21} className="[filter:blur(0.55px)]" />
          </div>
          <div className="ml-[16px] flex flex-col">
            <div className={`${btn} mt-[1px] border border-[#1f7ab8] bg-gradient-to-r from-[#dff1fc] via-[#eef8ff] to-[#dff1fc]`}>OK</div>
            <div className={`${btn} mt-[9px] border border-[#adadad] bg-[#e1e1e1]`}>Cancel</div>
            <div className="mt-[12px] flex items-center gap-[3px]"><Check on /><span>Preview</span></div>
          </div>
        </div>
        <div className="ml-[69px] mt-[4px] flex h-[14px] w-[92px] items-center justify-between">
          <div className="flex h-[11px] w-[11px] items-center justify-center border border-[#444] bg-[#ddd]"><div className="h-[1px] w-[5px] bg-[#222]" /></div>
          <span className="text-[9.5px]">100%</span>
          <div className="relative flex h-[11px] w-[11px] items-center justify-center border border-[#444] bg-[#ddd]"><div className="h-[1px] w-[5px] bg-[#222]" /><div className="absolute h-[5px] w-[1px] bg-[#222]" /></div>
        </div>
        <div className="ml-[14px] mt-[16px] flex h-[20px] items-center text-[12px]">
          <span className="w-[52px]">Amount:</span>
          <div className="flex h-[20px] w-[56px] items-center border border-[#7a9cc0] bg-gradient-to-r from-white to-[#e8f6fd] pl-[5px]">25<div className="h-[14px] w-[1px] bg-black" /></div>
          <span className="ml-[5px]">%</span>
        </div>
        <div className="relative ml-[17px] mt-[7px] h-[5px] w-[171px] rounded-full border border-[#aaa] bg-[#c4c4c4]">
          <div className="absolute left-[6px] top-[-4px] h-[11px] w-[10px] bg-[#d8d8d8] [clip-path:polygon(50%_0,100%_40%,100%_100%,0_100%,0_40%)]" />
        </div>
        <fieldset className="ml-[11px] mt-[14px] h-[62px] w-[301px] border border-[#a8a8a8] pl-[9px] pt-[2px]">
          <legend className="ml-[6px] px-[6px] leading-[14px]">Distribution</legend>
          <div className="flex h-[21px] items-center gap-[2px]"><Radio /><span>Uniform</span></div>
          <div className="flex h-[21px] items-center gap-[2px]"><Radio on /><span>Gaussian</span></div>
        </fieldset>
        <div className="ml-[11px] mt-[8px] flex items-center gap-[3px]"><Check on /><span>Monochromatic</span></div>
      </div>
    </div>
  );
}

function Cursor() {
  return (
    <svg className="absolute left-[1532px] top-[344px]" width="13" height="19" viewBox="0 0 13 19">
      <path d="M1 1v14l3.500-3 2.500 6 2.500-1-2.500-6H12z" fill="#fff" stroke="#000" strokeWidth="1" />
    </svg>
  );
}

function MenuBar() {
  const items = [
    ["File", "w-[35px]"], ["Edit", "w-[37px]"], ["Image", "w-[50px]"], ["Layer", "w-[45px]"], ["Type", "w-[43px]"], ["Select", "w-[49px]"],
    ["Filter", "w-[43px]"], ["3D", "w-[32px]"], ["View", "w-[43px]"], ["Window", "w-[61px]"], ["Help", "w-[40px]"],
  ];
  return (
    <div className="flex h-[29px] shrink-0 items-center border-b border-[#3a3a3a] bg-[#535353]">
      <div className="w-[46px] pl-[7px] font-['Liberation_Sans',sans-serif] text-[20px] font-bold leading-none text-[#6d97c4]">Ps</div>
      {items.map(([t, w]) => <div key={t} className={`text-[12px] text-[#d6d6d6] ${w}`}>{t}</div>)}
      <div className="flex-1" />
      <div className="mr-[3px] flex h-[18px] self-start rounded-b-[2px] border-x border-b border-[#333] bg-[#555]">
        <div className="flex w-[27px] items-end justify-center border-r border-[#333] pb-[4px]"><div className="h-[2px] w-[10px] bg-white" /></div>
        <div className="flex w-[27px] items-center justify-center border-r border-[#333]">
          <div className="relative h-[9px] w-[11px]"><div className="absolute right-0 top-0 h-[6px] w-[8px] border border-white" /><div className="absolute bottom-0 left-0 h-[6px] w-[8px] border border-white bg-[#555]" /></div>
        </div>
        <div className="flex w-[46px] items-center justify-center"><X size={12} color="#fff" strokeWidth={3.500} /></div>
      </div>
    </div>
  );
}

function OptBtn({ t, w }: { t: string; w: string }) {
  return <div className={`flex h-[17px] items-center justify-center rounded-[2px] border border-[#333] bg-gradient-to-b from-[#646464] to-[#555] text-[10px] text-[#e0e0e0] ${w}`}>{t}</div>;
}

function OptionsBar() {
  return (
    <div className="flex h-[34px] shrink-0 items-center border-b border-[#2e2e2e] bg-[#535353]">
      <div className="ml-[5px] h-[20px] w-[3px] bg-[repeating-linear-gradient(to_bottom,#888_0,#888_1px,transparent_1px,transparent_2px)]" />
      <div className="ml-[15px]"><HandIcon color="#e4e4e4" /></div>
      <div className="ml-[9px] h-0 w-0 border-x-[3px] border-t-[3px] border-x-transparent border-t-[#ccc]" />
      <div className="ml-[5px] h-[21px] w-[1px] bg-[#444]" />
      <div className="ml-[8px] h-[13px] w-[13px] rounded-[2px] border border-[#333] bg-[#5c5c5c]" />
      <span className="ml-[5px] w-[94px] whitespace-nowrap text-[9.7px] text-[#d0d0d0]">Scroll All Windows</span>
      <div className="h-[21px] w-[1px] bg-[#444]" />
      <OptBtn t="100%" w="ml-[11px] w-[53px]" />
      <OptBtn t="Fit Screen" w="ml-[10px] w-[71px]" />
      <OptBtn t="Fill Screen" w="ml-[10px] w-[71px]" />
      <div className="ml-[10px] h-[21px] w-[1px] bg-[#444]" />
      <div className="flex-1" />
      <div className="mr-[11px] w-[116px]"><DropBox w="w-[116px]" text="Essentials" /></div>
    </div>
  );
}

function TaskIcon({ w, active, line, children }: { w: string; active?: boolean; line?: string; children: React.ReactNode }) {
  return (
    <div className={`relative flex h-full items-center justify-center ${w} ${active ? "bg-[#2b3035]" : ""}`}>
      {children}
      {line && <div className={`absolute bottom-0 h-[2px] bg-[#b0b6bb] ${line}`} />}
    </div>
  );
}

function Taskbar() {
  return (
    <div className="flex h-[30px] shrink-0 items-center bg-[#0b0b0c] text-[#e8e8e8]">
      <TaskIcon w="w-[35px]"><FaWindows size={17} color="#fff" /></TaskIcon>
      <TaskIcon w="w-[38px]">
        <div className="flex items-center gap-[1px]"><div className="h-[10px] w-[1px] bg-white" /><div className="h-[14px] w-[11px] border border-white" /><div className="h-[10px] w-[1px] bg-white" /></div>
      </TaskIcon>
      <TaskIcon w="w-[38px]" line="w-[28px]">
        <Ico size={18}><path d="M1 3h7l2 2h9v12H1z" fill="#f2d06b" /><path d="M1 8h18v9H1z" fill="#f7df8f" /><rect x="7" y="11" width="7" height="5" fill="#3aa0d0" /></Ico>
      </TaskIcon>
      <TaskIcon w="w-[37px]" line="w-[28px]">
        <div className="flex h-[16px] w-[16px] items-center justify-center rounded-full bg-[conic-gradient(#d9483b_0_33%,#f5c333_33%_66%,#3ba55c_66%_100%)]"><div className="h-[7px] w-[7px] rounded-full border border-white bg-[#4285f4]" /></div>
      </TaskIcon>
      <TaskIcon w="w-[37px]" line="w-[28px]"><SiSpotify size={17} color="#1ed760" /></TaskIcon>
      <TaskIcon w="w-[37px]">
        <div className="flex h-[16px] w-[16px] items-center justify-center rounded-full border-2 border-[#dfe6f5] bg-[#4a62a8]"><div className="h-[6px] w-[6px] rounded-full bg-[#dfe6f5]" /></div>
      </TaskIcon>
      <TaskIcon w="w-[37px]" line="w-[27px]"><SiObsstudio size={17} color="#8a8a8a" /></TaskIcon>
      <TaskIcon w="w-[37px]" line="w-[28px]"><SiBlender size={17} color="#ea7600" /></TaskIcon>
      <TaskIcon w="w-[37px]" line="w-[28px]">
        <div className="flex h-[14px] w-[14px] items-center justify-center border border-[#ccc] bg-[#3a3a3a] text-[9px] font-bold leading-none text-[#f29c1f]">S</div>
      </TaskIcon>
      <TaskIcon w="w-[38px]" line="w-[28px]">
        <div className="flex h-[16px] w-[15px] flex-col gap-[1px]">
          <div className="h-[2px] bg-[#c0392b]" /><div className="h-[2px] bg-[#8e44ad]" /><div className="h-[2px] bg-[#2c6fbb]" /><div className="h-[2px] bg-[#e6c229]" /><div className="h-[2px] bg-[#2f9e44]" /><div className="h-[2px] bg-[#1a7a33]" />
        </div>
      </TaskIcon>
      <TaskIcon w="w-[37px]" line="w-[27px]"><SiUnity size={13} color="#eee" /></TaskIcon>
      <TaskIcon w="w-[37px]" line="w-[28px]">
        <Ico size={17}><path d="M14 1L7 8 3 5 1 6v8l2 1 4-3 7 7 5-2V3zM14 6v8l-4-4zM3 8l2 2-2 2z" fill="#a87cd6" fillRule="evenodd" /></Ico>
      </TaskIcon>
      <TaskIcon w="w-[38px]" line="w-[28px]">
        <div className="relative h-[15px] w-[13px] bg-[#d8e8a0]"><div className="mx-[2px] mt-[4px] h-[1px] bg-[#444]" /><div className="mx-[2px] mt-[2px] h-[1px] bg-[#444]" /><div className="mx-[2px] mt-[2px] h-[1px] bg-[#444]" /></div>
      </TaskIcon>
      <TaskIcon w="w-[35px]" active line="w-full">
        <div className="flex h-[16px] w-[16px] items-center justify-center border border-[#31a8ff] bg-[#001d34] font-['Liberation_Sans',sans-serif] text-[9px] font-bold leading-none text-[#31a8ff]">Ps</div>
      </TaskIcon>
      <div className="flex-1" />
      <ChevronUp size={15} color="#ddd" className="mr-[9px]" />
      <div className="relative mr-[10px]"><SiDropbox size={15} color="#eee" /><div className="absolute -bottom-[2px] -right-[2px] h-[8px] w-[8px] rounded-full bg-[#2fa84f]" /></div>
      <svg width="16" height="14" viewBox="0 0 16 14" className="mr-[10px]"><path d="M4 1.500h11v8H4zM9 9.500v3M6 12.500h6" stroke="#ddd" fill="none" /><rect x="0.500" y="0.500" width="5" height="5" fill="#0b0b0c" stroke="#ddd" /></svg>
      <Volume2 size={16} color="#ddd" strokeWidth={1.300} className="mr-[10px]" />
      <span className="w-[37px] text-[12px]">DAN</span>
      <span className="w-[61px] text-[12px]">7:39 PM</span>
      <svg width="17" height="16" viewBox="0 0 17 16" className="mr-[24px]"><path d="M0 0h17v12h-6l-2.500 3L6 12H0z" fill="#fff" /><path d="M3 3h11M3 6h11M3 9h7" stroke="#0b0b0c" /></svg>
    </div>
  );
}

export default function App() {
  return (
    <div className="relative flex h-[1080px] w-[1920px] flex-col overflow-hidden bg-[#282828] font-['Open_Sans',sans-serif]">
      <MenuBar />
      <OptionsBar />
      <div className="flex min-h-0 flex-1">
        <Toolbar />
        <DocArea />
        <RightSide />
      </div>
      <Taskbar />
      <PropsPanel />
      <Dialog />
      <Cursor />
    </div>
  );
}
